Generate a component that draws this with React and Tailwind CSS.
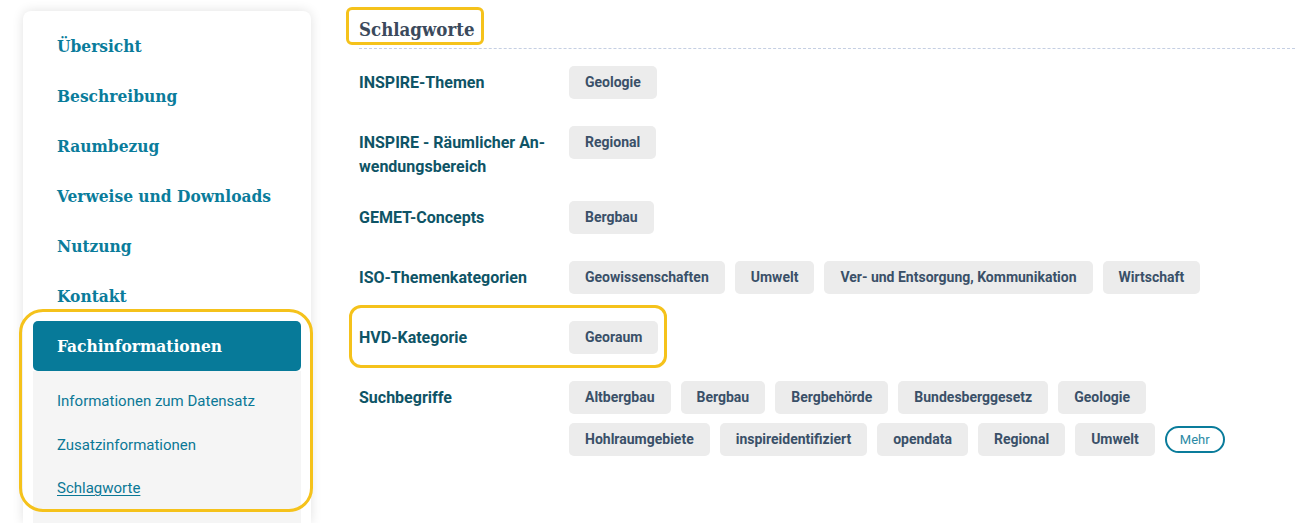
import React from 'react';

const slab = { fontFamily: '"DejaVu Serif Condensed", "DejaVu Serif", serif' };

const navItems = ['Übersicht', 'Beschreibung', 'Raumbezug', 'Verweise und Downloads', 'Nutzung', 'Kontakt'];
const subItems = ['Informationen zum Datensatz', 'Zusatzinformationen', 'Schlagworte'];

const Tag = ({ children }) => (
    <span className="h-[33px] px-4 flex items-center rounded-[5px] bg-[#ececec] text-[14px] font-bold text-[#3a5068] whitespace-nowrap">
        {children}
    </span>
);

const Row = ({ label, rows, highlight, extra }) => (
    <div className="relative flex items-start pb-[27px]">
        {highlight && (
            <div className="absolute -left-[10px] -top-[16px] w-[318px] h-[63px] rounded-[12px] border-[3px] border-[#f5c21b] pointer-events-none"></div>
        )}
        <div className="w-[210px] shrink-0 pt-[5px] -mb-[5px] text-[16px] leading-6 font-bold text-[#0e5466]">{label}</div>
        <div className="flex flex-col gap-[9px]">
            {rows.map((tags, i) => (
                <div key={i} className="flex items-center gap-[10px]">
                    {tags.map((t) => <Tag key={t}>{t}</Tag>)}
                    {i === rows.length - 1 && extra}
                </div>
            ))}
        </div>
    </div>
);

export default function App() {
    return (
        <div className="min-h-[523px] h-[523px] overflow-hidden bg-white flex gap-[48px] pl-[23px] pr-[8px]" style={{ fontFamily: 'Roboto, "Liberation Sans", sans-serif' }}>
            {/* Sidebar */}
            <aside className="relative w-[288px] shrink-0 pt-[11px]">
                <div className="h-full bg-white rounded-t-[8px] shadow-[0_0_12px_rgba(0,0,0,0.12)] p-[10px] pb-0 flex flex-col">
                    {navItems.map((item) => (
                        <div key={item} className="h-[50px] flex items-center pl-6 pt-[2px] text-[17.2px] font-bold text-[#0a7c9b]" style={slab}>
                            {item}
                        </div>
                    ))}
                    <div className="h-[50px] flex items-center pl-6 pt-[2px] rounded-[5px] bg-[#077a99] text-[17.2px] font-bold text-white" style={slab}>
                        Fachinformationen
                    </div>
                    <div className="flex-1 bg-[#f5f5f5] pt-[8px]">
                        {subItems.map((item, i) => (
                            <div key={item} className={(i === 2 ? 'h-[43px] ' : 'h-[44px] ') + 'flex items-center pl-6 text-[15px] text-[#0b7896]'}>
                                <span className={i === 2 ? 'underline underline-offset-2' : ''}>{item}</span>
                            </div>
                        ))}
                    </div>
                </div>
                <div className="absolute left-[-4px] top-[309px] w-[294px] h-[203px] rounded-[24px] border-[3px] border-[#f5c21b] pointer-events-none"></div>
            </aside>

            {/* Content */}
            <main className="flex-1 pt-[16px]">
                <div className="border-b border-dashed border-[#c5cfe3] pb-[4px]">
                    <span className="relative inline-block">
                        <span className="absolute -left-[13px] -right-[10px] -top-[9px] -bottom-[1px] rounded-[6px] border-[3px] border-[#f5c21b]"></span>
                        <h2 className="text-[18.5px] leading-[28px] font-bold text-[#3b4a5c]" style={slab}>Schlagworte</h2>
                    </span>
                </div>
                <div className="mt-[17px]">
                    <Row label="INSPIRE-Themen" rows={[['Geologie']]} />
                    <Row label={<>INSPIRE - Räumlicher An-<br />wendungsbereich</>} rows={[['Regional']]} />
                    <Row label="GEMET-Concepts" rows={[['Bergbau']]} />
                    <Row label="ISO-Themenkategorien" rows={[['Geowissenschaften', 'Umwelt', 'Ver- und Entsorgung, Kommunikation', 'Wirtschaft']]} />
                    <Row label="HVD-Kategorie" rows={[['Georaum']]} highlight />
                    <Row
                        label="Suchbegriffe"
                        rows={[
                            ['Altbergbau', 'Bergbau', 'Bergbehörde', 'Bundesberggesetz', 'Geologie'],
                            ['Hohlraumgebiete', 'inspireidentifiziert', 'opendata', 'Regional', 'Umwelt'],
                        ]}
                        extra={
                            <button className="h-[27px] px-[13px] rounded-full border-2 border-[#0a7c9b] text-[13px] text-[#2b8aa5] bg-white">
                                Mehr
                            </button>
                        }
                    />
                </div>
            </main>
        </div>
    );
}
